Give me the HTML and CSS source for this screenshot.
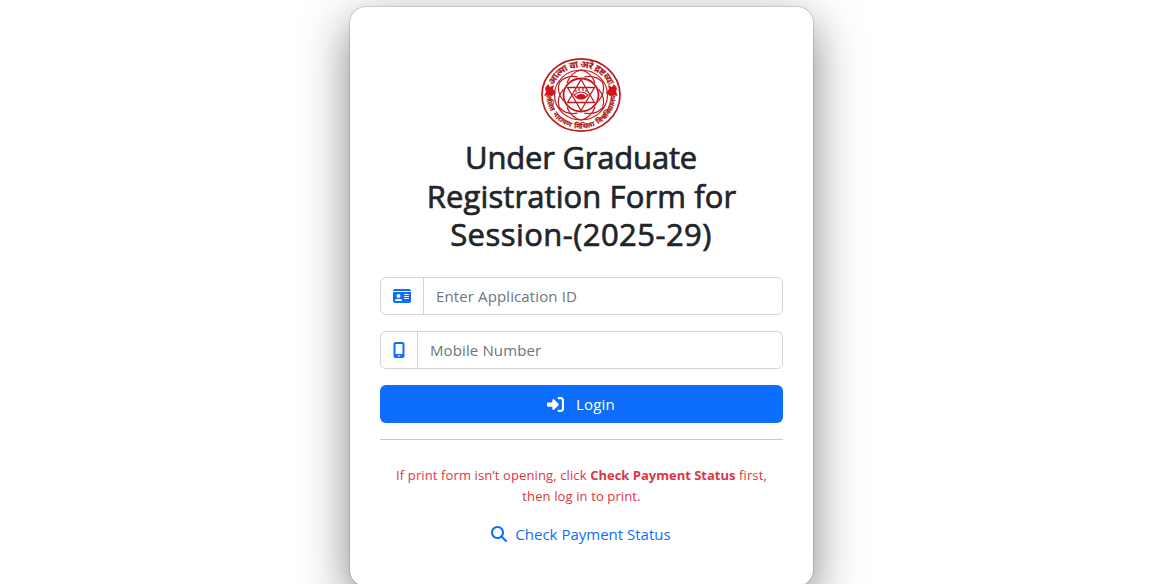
FILE: index.html
```html
<!DOCTYPE html>
<html lang="en">
<head>
<meta charset="utf-8">
<title>Under Graduate Registration Form</title>
<link rel="stylesheet" href="styles.css">
</head>
<body>
<main class="card">
  <svg class="logo" viewBox="0 0 80 76" role="img" aria-label="University emblem">
    <defs>
      <path id="arc-top" d="M11 38a29 27.500 0 0 1 58 0"/>
      <path id="arc-bottom" d="M5.500 38a34.500 33.500 0 0 0 69 0"/>
    </defs>
    <g fill="none" stroke="#bd1a20">
      <ellipse cx="40" cy="38" rx="39" ry="36.2" stroke-width="1.7"/>
      <ellipse cx="40" cy="38" rx="26.5" ry="25" stroke-width="1.2"/>
      <ellipse cx="40" cy="38" rx="17.5" ry="16.5" stroke-width="1.8"/>
      <path stroke-width="1.3" d="M40 22.5 53.5 45.5H26.500Z M40 53.500 26.500 30.500H53.500Z"/>
      <g stroke-width="1.200">
        <path id="petal" d="M26 26Q30 15 40 13Q50 15 54 26"/>
        <use href="#petal" transform="rotate(60 40 38)"/>
        <use href="#petal" transform="rotate(120 40 38)"/>
        <use href="#petal" transform="rotate(180 40 38)"/>
        <use href="#petal" transform="rotate(240 40 38)"/>
        <use href="#petal" transform="rotate(300 40 38)"/>
      </g>
      <path stroke-width="1.200" d="M33 38Q40 32 47 38Q40 46 33 38ZM35 35v-2M38 34v-3M42 34v-3M45 35v-2"/>
    </g>
    <g fill="#d3141b">
      <ellipse cx="40" cy="39.500" rx="4.500" ry="2.500"/>
      <path d="M4 31 7 27 9 30 13 28 12 32 15 36 11 39 7 38 3 39 5 35ZM76 31 73 27 71 30 67 28 68 32 65 36 69 39 73 38 77 39 75 35Z"/>
    </g>
    <g class="logo-text">
      <text font-size="9.600"><textPath href="#arc-top" startOffset="50%" text-anchor="middle" textLength="70">आत्मा वा अरे द्रष्टव्यः</textPath></text>
      <text font-size="7.200" word-spacing="1.500"><textPath href="#arc-bottom" startOffset="50%" text-anchor="middle">ललित नारायण मिथिला विश्वविद्यालय</textPath></text>
    </g>
  </svg>
  <h1 class="title"><span class="l1">Under Graduate</span><span class="l2">Registration Form for</span><span class="l3">Session-(2025-29)</span></h1>
  <form class="form">
    <label class="group">
      <span class="addon"><svg width="18" height="16" viewBox="0 0 576 512"><path fill="currentColor" d="M0 96l576 0c0-35.300-28.700-64-64-64L64 32C28.700 32 0 60.700 0 96zm0 32L0 416c0 35.300 28.700 64 64 64l448 0c35.300 0 64-28.700 64-64l0-288L0 128zM64 405.300c0-29.500 23.900-53.300 53.300-53.300l117.300 0c29.500 0 53.300 23.900 53.300 53.300c0 5.900-4.800 10.700-10.700 10.700L74.700 416c-5.900 0-10.700-4.800-10.700-10.700zM176 192a64 64 0 1 1 0 128 64 64 0 1 1 0-128zm176 16c0-8.800 7.200-16 16-16l128 0c8.800 0 16 7.200 16 16s-7.200 16-16 16l-128 0c-8.800 0-16-7.200-16-16zm0 64c0-8.800 7.200-16 16-16l128 0c8.800 0 16 7.200 16 16s-7.200 16-16 16l-128 0c-8.800 0-16-7.200-16-16zm0 64c0-8.800 7.200-16 16-16l128 0c8.800 0 16 7.200 16 16s-7.200 16-16 16l-128 0c-8.800 0-16-7.200-16-16z"/></svg></span>
      <input class="input" type="text" placeholder="Enter Application ID">
    </label>
    <label class="group">
      <span class="addon"><svg width="12" height="16" viewBox="0 0 384 512"><path fill="currentColor" d="M16 64C16 28.700 44.700 0 80 0L304 0c35.300 0 64 28.700 64 64l0 384c0 35.300-28.700 64-64 64L80 512c-35.300 0-64-28.700-64-64L16 64zM144 448c0 8.800 7.200 16 16 16l64 0c8.800 0 16-7.200 16-16s-7.200-16-16-16l-64 0c-8.800 0-16 7.200-16 16zM304 64L80 64l0 320 224 0 0-320z"/></svg></span>
      <input class="input" type="text" placeholder="Mobile Number">
    </label>
    <button class="login" type="button"><svg width="17" height="17" viewBox="0 0 512 512"><path fill="currentColor" d="M217.900 105.900L340.700 228.700c7.200 7.200 11.300 17.100 11.300 27.300s-4.100 20.100-11.300 27.300L217.900 406.100c-6.400 6.400-15 9.900-24 9.900c-18.700 0-33.900-15.200-33.900-33.900l0-62.100L32 320c-17.700 0-32-14.300-32-32l0-64c0-17.700 14.300-32 32-32l128 0 0-62.100c0-18.700 15.200-33.900 33.900-33.900c9 0 17.600 3.600 24 9.900zM352 416l64 0c17.700 0 32-14.300 32-32l0-256c0-17.700-14.300-32-32-32l-64 0c-17.700 0-32-14.300-32-32s14.300-32 32-32l64 0c53 0 96 43 96 96l0 256c0 53-43 96-96 96l-64 0c-17.700 0-32-14.300-32-32s14.300-32 32-32z"/></svg><span>Login</span></button>
  </form>
  <hr class="rule">
  <p class="note"><span>If print form isn’t opening, click <strong>Check Payment Status</strong> first,</span><span>then log in to print.</span></p>
  <a class="status" href="#"><svg width="16" height="16" viewBox="0 0 512 512"><path fill="currentColor" d="M416 208c0 45.900-14.900 88.300-40 122.700L502.600 457.400c12.500 12.500 12.500 32.800 0 45.300s-32.800 12.500-45.300 0L330.700 376c-34.400 25.200-76.800 40-122.700 40C93.100 416 0 322.900 0 208S93.100 0 208 0S416 93.100 416 208zM208 352a144 144 0 1 0 0-288 144 144 0 1 0 0 288z"/></svg><span>Check Payment Status</span></a>
</main>
</body>
</html>
```
FILE: styles.css
```css
* { box-sizing: border-box; }
html { overflow: hidden; }
body {
  margin: 0;
  height: 584px;
  padding: 7px 0 0 4px;
  display: flex;
  justify-content: center;
  align-items: flex-start;
  overflow: hidden;
  background: #fff;
  color: #212529;
  font-family: "Open Sans", "Noto Sans", sans-serif;
  font-size: 15px;
}
.card {
  width: 463px;
  height: 579px;
  flex: none;
  margin-left: 5px;
  padding: 50px 30px 0;
  border-radius: 16px;
  background: #fff;
  display: flex;
  flex-direction: column;
  align-items: stretch;
  box-shadow: 0 0 0 1px rgba(0, 0, 0, .12), 0 16px 48px rgba(0, 0, 0, .5);
}
.logo { width: 80px; height: 76px; align-self: center; flex: none; margin-right: 1px; }
.logo-text { fill: #a81a1a; stroke: #a81a1a; stroke-width: .2px; font-family: "Noto Sans Devanagari", "Noto Sans", sans-serif; font-weight: 700; }
.title {
  margin: 5.4px 0 23.4px;
  display: flex;
  flex-direction: column;
  align-items: center;
  font-size: 31px;
  line-height: 38.4px;
  font-weight: 400;
  -webkit-text-stroke: .7px #212529;
  white-space: nowrap;
}
.l1 { letter-spacing: -.2px; margin-right: 1px; }
.l2 { letter-spacing: .1px; }
.l3 { letter-spacing: .45px; margin-right: 1px; }
.form { display: flex; flex-direction: column; gap: 16px; }
.group {
  height: 38px;
  display: flex;
  border: 1px solid #ced4da;
  border-radius: 6px;
  overflow: hidden;
}
.addon {
  display: flex;
  align-items: center;
  padding: 0 12px;
  border-right: 1px solid #ced4da;
  color: #0d6efd;
}
.input {
  flex: 1;
  min-width: 0;
  border: 0;
  outline: 0;
  padding: 0 12px;
  font: inherit;
  letter-spacing: .12px;
  background: transparent;
}
.input::placeholder { color: #6c757d; opacity: 1; }
.login {
  height: 38px;
  border: 0;
  border-radius: 6px;
  background: #0d6efd;
  color: #fff;
  font: inherit;
  letter-spacing: .2px;
  display: flex;
  justify-content: center;
  align-items: center;
  gap: 12px;
  padding: 0 7px 0 6px;
}
.rule { width: 100%; height: 1px; margin: 16px 0 25px; border: 0; background: #c8c9ca; flex: none; }
.note {
  margin: 0;
  display: flex;
  flex-direction: column;
  align-items: center;
  color: #dc3545;
  font-size: 13px;
  letter-spacing: .12px;
  line-height: 21px;
  white-space: nowrap;
}
.note strong { letter-spacing: 0; }
.status {
  margin-top: 15px;
  padding-right: 1px;
  display: flex;
  justify-content: center;
  align-items: center;
  gap: 8px;
  height: 24px;
  color: #0d6efd;
  text-decoration: none;
}
```
